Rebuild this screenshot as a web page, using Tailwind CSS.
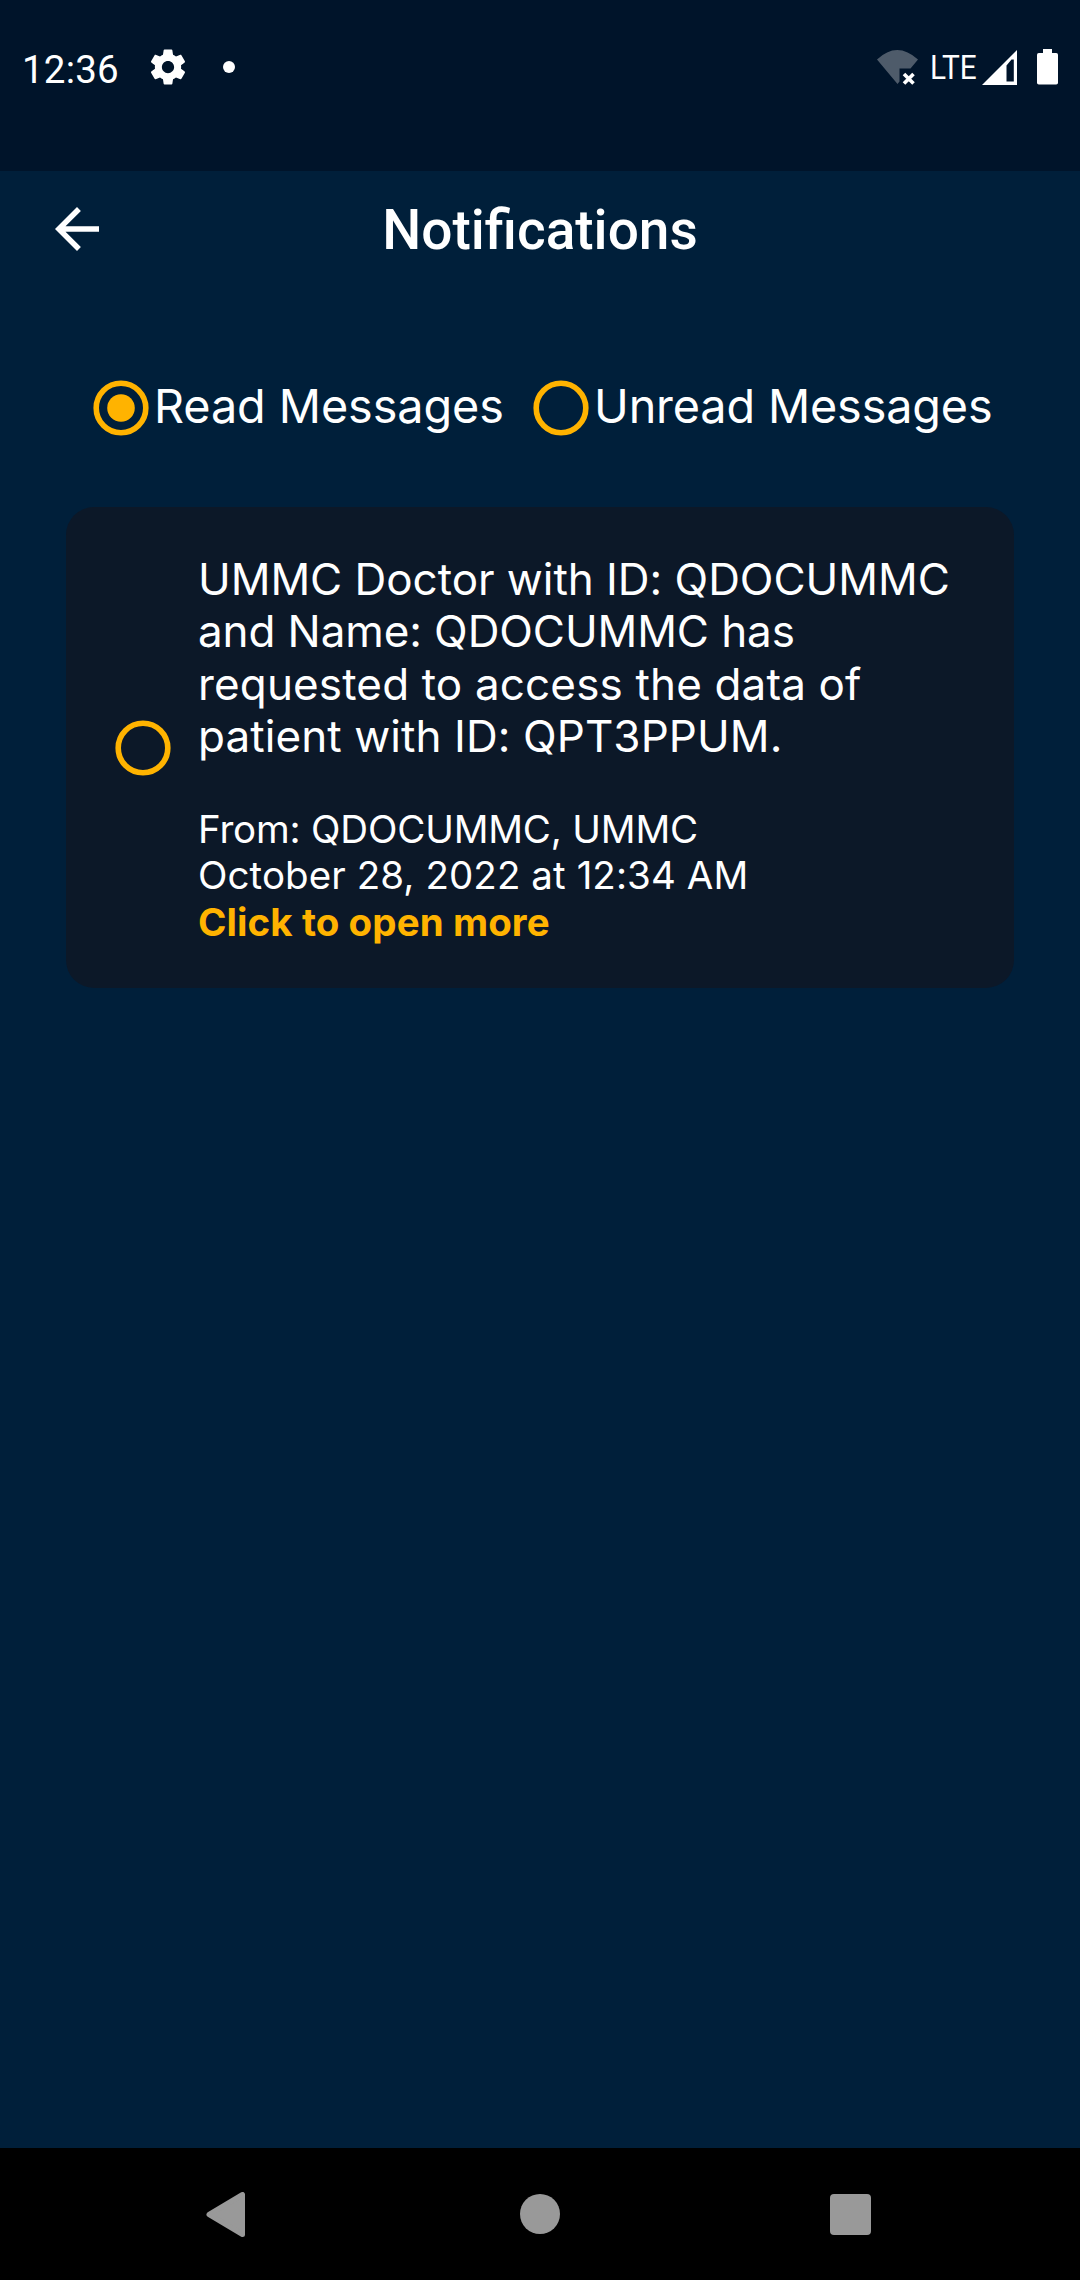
<!DOCTYPE html>
<html lang="en">
<head>
<meta charset="utf-8">
<title>Notifications</title>
<script src="https://cdn.jsdelivr.net/npm/@tailwindcss/browser@4"></script>
</head>
<body class="w-[1080px] h-[2280px] bg-[#001f3a] text-white overflow-hidden flex flex-col whitespace-nowrap font-['Inter',sans-serif]">
  <!-- Status bar -->
  <header class="h-[171px] shrink-0 bg-[#00142a] flex items-start justify-between pt-[47px] pl-[22px] pr-[22px] font-['Roboto',sans-serif]">
    <div class="flex items-start">
      <span class="w-[125px] text-[38.5px] leading-[45px] tracking-[0.2px]">12:36</span>
      <svg class="w-[42px] h-[42px] -mt-px" viewBox="0 0 24 24" fill="currentColor"><path d="M19.43 12.98c.04-.32.07-.64.07-.98s-.03-.66-.07-.98l2.11-1.65c.19-.15.24-.42.12-.64l-2-3.46c-.12-.22-.39-.3-.61-.22l-2.49 1c-.52-.4-1.08-.73-1.69-.98l-.38-2.65C14.46 2.18 14.25 2 14 2h-4c-.25 0-.46.18-.49.42l-.38 2.65c-.61.25-1.17.59-1.69.98l-2.49-1c-.23-.09-.49 0-.61.22l-2 3.46c-.13.22-.07.49.12.64l2.11 1.65c-.04.32-.07.65-.07.98s.03.66.07.98l-2.11 1.65c-.19.15-.24.42-.12.64l2 3.46c.12.22.39.3.61.22l2.49-1c.52.4 1.08.73 1.69.98l.38 2.65c.03.24.24.42.49.42h4c.25 0 .46-.18.49-.42l.38-2.65c.61-.25 1.17-.59 1.69-.98l2.49 1c.23.09.49 0 .61-.22l2-3.46c.12-.22.07-.49-.12-.64l-2.11-1.65zM12 15.5c-1.93 0-3.5-1.57-3.5-3.5s1.57-3.5 3.5-3.5 3.5 1.57 3.5 3.5-1.57 3.5-3.5 3.5z"/></svg>
      <span class="ml-[34px] mt-[14px] size-3 rounded-full bg-white"></span>
    </div>
    <div class="flex items-start">
      <svg class="w-[44px] h-[40px]" viewBox="0 0 44 40"><path d="M1 12.5Q21 -6.500 42 12.500L34.500 21.500H23.500V34.500L21.500 37Z" fill="#4e5b6a"/><path d="M28 27l9.500 9.500M37.500 27L28 36.500" stroke="#fff" stroke-width="3.600" fill="none"/></svg>
      <span class="ml-[10px] w-[52px] text-[33.500px] leading-[39px] mt-[1px] origin-left scale-x-[0.89]">LTE</span>
      <svg class="w-[35px] h-[35px] mt-[3px]" viewBox="0 0 35 35"><path fill="#fff" fill-rule="evenodd" d="M0 35L35 0V35ZM24.500 15.500V31.500H31.800V9.500H29.500Z"/></svg>
      <svg class="w-[21px] h-[36px] ml-[20px] mt-[2px]" viewBox="0 0 21 36" fill="#fff"><rect x="6" width="9" height="6"/><rect y="4" width="21" height="31.500" rx="1.800"/></svg>
    </div>
  </header>

  <!-- App bar -->
  <nav class="h-[118px] shrink-0 grid grid-cols-[1fr_auto_1fr] items-center pl-[44px] pr-[44px] font-['Roboto',sans-serif]">
    <svg class="size-[66px] mb-[2px]" viewBox="0 0 24 24" fill="currentColor"><path d="M20 11H7.830l5.590-5.590L12 4l-8 8 8 8 1.410-1.410L7.830 13H20v-2z"/></svg>
    <h1 class="text-[55px] leading-[64px] font-medium">Notifications</h1>
  </nav>

  <!-- Message filter -->
  <div class="mt-[89px] h-[56px] shrink-0 flex items-center pl-[93px] text-[46.750px] leading-[56px]">
    <svg class="size-[56px] mt-1" viewBox="0 0 56 56"><circle cx="28" cy="28" r="24.800" fill="none" stroke="#ffb300" stroke-width="5.600"/><circle cx="28" cy="28" r="13.800" fill="#ffb300"/></svg>
    <span class="ml-[5px] w-[379px] tracking-[-0.080px]">Read Messages</span>
    <svg class="size-[56px] mt-1" viewBox="0 0 56 56"><circle cx="28" cy="28" r="24.800" fill="none" stroke="#ffb300" stroke-width="5.600"/></svg>
    <span class="ml-[5px] tracking-[-0.150px]">Unread Messages</span>
  </div>

  <!-- Notification card -->
  <main class="mx-[66px] mt-[73px] h-[481px] shrink-0 rounded-[28px] bg-[#0c1828] flex items-center pl-[49px]">
    <svg class="size-[56px]" viewBox="0 0 56 56"><circle cx="28" cy="28" r="24.800" fill="none" stroke="#ffb300" stroke-width="5.600"/></svg>
    <div class="ml-[27px] h-[481px] pt-[45.750px]">
      <p class="text-[44px] leading-[52.500px]">
        <span class="block tracking-[-0.040px]">UMMC Doctor with ID: QDOCUMMC</span>
        <span class="block tracking-[-0.100px]">and Name: QDOCUMMC has</span>
        <span class="block tracking-[0.150px]">requested to access the data of</span>
        <span class="block tracking-[0.080px]">patient with ID: QPT3PPUM.</span>
      </p>
      <p class="mt-[43px] text-[38.500px] leading-[46.500px]">
        <span class="block tracking-[-0.180px]">From: QDOCUMMC, UMMC</span>
        <span class="block tracking-[0.080px]">October 28, 2022 at 12:34 AM</span>
        <a class="block w-fit font-bold text-[#ffb300] tracking-[0.080px]">Click to open more</a>
      </p>
    </div>
  </main>

  <!-- System navigation -->
  <footer class="mt-auto h-[132px] shrink-0 bg-black flex items-center pl-[206px] text-[#999]">
    <svg class="w-[40px] h-[45px]" viewBox="0 0 40 45"><path d="M3 22.500L36.500 2.500V42.500Z" fill="currentColor" stroke="currentColor" stroke-width="5" stroke-linejoin="round"/></svg>
    <span class="ml-[274px] size-10 rounded-full bg-[#999]"></span>
    <span class="ml-[270px] size-[41px] rounded-[4px] bg-[#999]"></span>
  </footer>
</body>
</html>
